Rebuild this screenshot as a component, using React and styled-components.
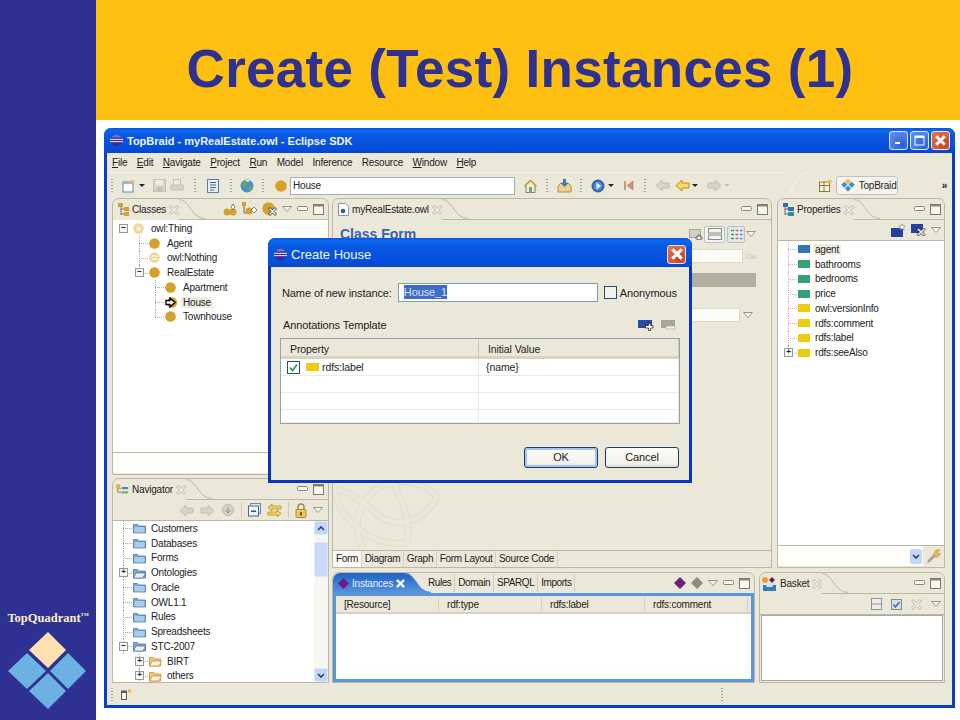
import React from 'react'
import styled, { createGlobalStyle } from 'styled-components'

const CHROME = '#ebe8d9'
const LINE = '#bcb8a5'
const NAVY = '#2e3192'

const Global = createGlobalStyle`
  html, body { margin: 0; padding: 0; background: #fff; }
  body { font-family: "Liberation Sans", Arial, sans-serif; font-size: 10px; letter-spacing: -0.2px; color: #222; }
  svg { display: block; flex: none; }
`

const Slide = styled.div`
  width: 960px;
  height: 720px;
  display: grid;
  grid-template-columns: 96px 1fr;
  overflow: hidden;
`
const Sidebar = styled.aside`
  background: ${NAVY};
  display: flex;
  flex-direction: column;
  justify-content: flex-end;
  align-items: center;
  padding-bottom: 10px;
`
const Brand = styled.div`
  font-family: "Liberation Serif", serif;
  font-weight: bold;
  font-size: 12.5px;
  letter-spacing: 0;
  color: #fbf0c8;
  white-space: nowrap;
  margin-bottom: 4px;
  sup { font-size: 5px; vertical-align: 6px; line-height: 0; }
`
const Main = styled.main`
  display: flex;
  flex-direction: column;
`
const Header = styled.header`
  height: 120px;
  box-sizing: border-box;
  padding: 16px 16px 0 0;
  background: #fdc010;
  display: flex;
  align-items: center;
  justify-content: center;
`
const Title = styled.h1`
  margin: 0;
  font-size: 53px;
  font-weight: bold;
  color: ${NAVY};
  letter-spacing: 0.3px;
`
const Stage = styled.div`
  flex: 1;
  padding: 8px 5px 12px 8px;
`

/* eclipse window */
const Win = styled.div`
  position: relative;
  height: 100%;
  box-sizing: border-box;
  display: flex;
  flex-direction: column;
  background: ${CHROME};
  border: solid #0a3ec8;
  border-width: 0 3px 3px 3px;
  border-radius: 7px 7px 0 0;
`
const TitleBar = styled.div`
  height: ${p => p.$h || 25}px;
  box-sizing: border-box;
  margin: 0 -3px;
  padding: ${p => p.$pt || 0}px ${p => p.$pr || 5}px 0 6px;
  flex: none;
  display: flex;
  align-items: center;
  gap: 2px;
  border-radius: 7px 7px 0 0;
  background: linear-gradient(#0a56dc 0, #0b68ee 10%, #0858e2 30%, #0550dc 75%, #0846cc 100%);
  color: #fff;
`
const WinTitle = styled.span`
  flex: 1;
  margin-left: 2px;
  font-size: ${p => p.$size || 11}px;
  font-weight: ${p => p.$weight || 'bold'};
  letter-spacing: 0;
  color: #f2f6ff;
  white-space: nowrap;
`
const CapsBtn = styled.span`
  width: 19px;
  height: 19px;
  box-sizing: border-box;
  border: 1px solid #dfe9fb;
  border-radius: 3px;
  display: flex;
  align-items: center;
  justify-content: center;
  background: ${p => p.$close
    ? 'radial-gradient(circle at 70% 75%, #c9401c, #e8724a 90%)'
    : 'radial-gradient(circle at 75% 80%, #2a5fd8, #5f8ef0 90%)'};
`
const MenuBar = styled.nav`
  height: 19px;
  flex: none;
  display: flex;
  align-items: center;
  gap: 9.5px;
  padding-left: 5px;
  u { text-decoration: underline; }
`
const ToolBar = styled.div`
  height: 26px;
  flex: none;
  display: flex;
  align-items: center;
  padding-left: 4px;
  border-top: 1px solid #f8f6ec;
  box-sizing: border-box;
`
const Grip = styled.span`
  width: 2px;
  height: 14px;
  margin: 0 ${p => p.$m ?? 8}px;
  background: repeating-linear-gradient(#a8a493 0 1px, transparent 1px 3px);
  flex: none;
`
const Tool = styled.span`
  width: ${p => p.$w || 18}px;
  flex: none;
  display: flex;
  justify-content: center;
  margin-left: ${p => p.$ml || 0}px;
`
const Caret = styled.span`
  width: 0;
  height: 0;
  margin: 0 5px 0 1px;
  border: solid transparent;
  border-width: 3px 3px 0;
  border-top-color: ${p => p.$off ? '#c5c2b4' : '#222'};
  flex: none;
`
const UrlInput = styled.div`
  width: 225px;
  height: 18px;
  box-sizing: border-box;
  flex: none;
  background: #fff;
  border: 1px solid #a3aebb;
  padding-left: 2px;
  line-height: 16px;
`
const PerspArea = styled.div`
  margin-left: auto;
  margin-top: -1px;
  height: 26px;
  display: flex;
  align-items: center;
  padding-right: 5px;
  background: ${CHROME};
`
const PerspBtn = styled.div`
  height: 19px;
  width: 62px;
  box-sizing: border-box;
  margin-left: 1px;
  margin-right: 44px;
  border: 1px solid #b9c3cf;
  border-radius: 3px;
  background: #f6f4ea;
  display: flex;
  align-items: center;
  gap: 3px;
  padding-left: 3px;
`
const More = styled.span`
  font-size: 10px;
  font-weight: bold;
`
const Workbench = styled.div`
  flex: 1;
  display: flex;
  gap: 3px;
  padding: 0 7px 0 5px;
  min-height: 0;
`
const Column = styled.div`
  display: flex;
  flex-direction: column;
  width: ${p => p.$w}px;
  gap: ${p => p.$gap}px;
`
const Row = styled.div`
  display: flex;
  height: ${p => p.$h}px;
  gap: ${p => p.$gap}px;
`
const StatusBar = styled.footer`
  height: 21px;
  flex: none;
  display: flex;
  align-items: center;
  padding-left: 4px;
`
const StatusIcon = styled.span`
  margin-left: 8px;
`
const StatusEnd = styled.span`
  display: flex;
  margin-left: 589px;
`

/* views */
const View = styled.section`
  width: ${p => p.$w}px;
  height: ${p => p.$h}px;
  box-sizing: border-box;
  display: flex;
  flex-direction: column;
  border: 1px solid ${LINE};
  border-radius: 7px 7px 0 0;
  background: ${CHROME};
  overflow: hidden;
`
const ViewHead = styled.div`
  height: 20px;
  flex: none;
  display: flex;
  align-items: stretch;
  border-bottom: 1px solid ${p => p.$active ? '#5b96d8' : LINE};
`
const Tab = styled.div`
  display: flex;
  align-items: center;
  gap: 3px;
  padding-left: ${p => p.$pl ?? 5}px;
  margin-bottom: -1px;
  color: ${p => p.$active ? '#e8f2ff' : '#222'};
  background: ${p => p.$active ? 'linear-gradient(#1f62c8, #5a96dc)' : CHROME};
  border-radius: 7px 0 0 0;
  white-space: nowrap;
`
const CurveWrap = styled.span`
  display: block;
  margin-bottom: -1px;
  flex: none;
`
const SideTabs = styled.div`
  display: flex;
  align-items: center;
  margin-left: -6px;
`
const SideTab = styled.span`
  padding: 0 3px;
  height: 18px;
  line-height: 18px;
  letter-spacing: -0.45px;
  border-right: 1px solid #cfcbb9;
`
const Actions = styled.div`
  margin-left: auto;
  display: flex;
  align-items: center;
  gap: ${p => p.$gap ?? 5}px;
  padding-right: ${p => p.$pr ?? 3}px;
`
const SubBar = styled.div`
  height: ${p => p.$h || 20}px;
  flex: none;
  display: flex;
  align-items: center;
  justify-content: flex-end;
  gap: ${p => p.$gap ?? 5}px;
  padding-right: ${p => p.$pr ?? 3}px;
  border-bottom: 1px solid ${LINE};
`
const Divider = styled.span`
  width: 1px;
  height: 16px;
  background: #cfcbb9;
`
const Split = styled.div`
  flex: 1;
  min-height: 0;
  display: flex;
`
const Tree = styled.div`
  flex: 1;
  min-height: 0;
  background: #fff;
  overflow: hidden;
  padding-top: ${p => p.$pt || 0}px;
`
const Node = styled.div`
  position: relative;
  height: 14.75px;
  display: flex;
  align-items: center;
  gap: 5px;
  padding-left: ${p => 6 + p.$level * 16}px;
  white-space: nowrap;
  &::before, &::after {
    content: ${p => p.$root ? 'none' : '""'};
    position: absolute;
    left: ${p => 10 + p.$level * 16}px;
  }
  &::before {
    top: 50%;
    width: 9px;
    border-top: 1px dotted ${p => p.$guide || '#aaa797'};
  }
  &::after {
    top: 0;
    height: ${p => p.$last ? '50%' : '100%'};
    border-left: 1px dotted ${p => p.$guide || '#aaa797'};
  }
`
const Expander = styled.span`
  position: relative;
  z-index: 1;
  width: 9px;
  height: 9px;
  box-sizing: border-box;
  flex: none;
  border: 1px solid ${p => p.$empty ? 'transparent' : '#8f9aa3'};
  background: ${p => p.$empty ? 'transparent' : '#f6f5ef'};
  font-size: 8px;
  line-height: 6px;
  text-align: center;
  color: #222;
  font-weight: bold;
`
const NodeIcon = styled.span`
  position: relative;
  z-index: 1;
  flex: none;
  background: #fff;
  padding-right: ${p => p.$pad || 0}px;
`
const Label = styled.span`
  padding: 0 2px;
  margin-left: -2px;
  background: ${p => p.$selected ? '#efece0' : 'transparent'};
`
const FilterRow = styled.div`
  height: ${p => p.$h || 20}px;
  flex: none;
  display: flex;
  align-items: center;
  gap: 3px;
  border-top: 1px solid ${LINE};
  padding-right: ${p => p.$pr || 0}px;
`
const FilterInput = styled.div`
  flex: 1;
  height: 100%;
  background: #fdfdfa;
  display: flex;
  justify-content: flex-end;
  align-items: center;
  padding-right: 1px;
`
const FilterBottom = styled.div`
  height: 1px;
  flex: none;
`
const ComboBtn = styled.span`
  width: 12px;
  height: 15px;
  border-radius: 2px;
  background: #c5d5f6;
  display: flex;
  align-items: center;
  justify-content: center;
`
const Scrollbar = styled.div`
  width: 14px;
  flex: none;
  background: #f7f7f2;
  display: flex;
  flex-direction: column;
`
const ScrollBtn = styled.span`
  height: 14px;
  flex: none;
  border-radius: 2px;
  background: #c5d5f6;
  border: 1px solid #dfe7fb;
  box-sizing: border-box;
  display: flex;
  align-items: center;
  justify-content: center;
`
const ScrollThumb = styled.span`
  height: 35px;
  margin-top: 7px;
  flex: none;
  border-radius: 2px;
  background: #c9d8f8;
  border: 1px solid #dfe7fb;
  box-sizing: border-box;
`
const ScrollFill = styled.span`
  flex: 1;
`

/* editor */
const FormPane = styled.div`
  position: relative;
  flex: 1;
  padding: 2px 15px 0 7px;
  overflow: hidden;
`
const FormHead = styled.div`
  height: 24px;
  display: flex;
  align-items: center;
`
const FormTitle = styled.div`
  flex: 1;
  font-size: 14px;
  font-weight: bold;
  letter-spacing: 0;
  color: #3a62ae;
`
const ViewToggle = styled.span`
  width: ${p => p.$w || 18}px;
  height: 17px;
  box-sizing: border-box;
  border: 1px solid #b7c0ca;
  border-radius: 2px;
  background: ${p => p.$on ? '#dfe3d8' : '#f6f4ea'};
  display: flex;
  align-items: center;
  justify-content: center;
  margin: 0 1px 0 1px;
`
const FormRow = styled.div`
  margin-top: ${p => p.$mt}px;
  height: 14px;
  display: flex;
  align-items: center;
  gap: 3px;
  padding-right: ${p => p.$pr || 0}px;
`
const FormField = styled.div`
  flex: 1;
  height: 100%;
  box-sizing: border-box;
  border: 1px solid #dcd9ca;
  background: #fdfdf8;
`
const OkText = styled.span`
  color: #c4c1b2;
  font-size: 8px;
  width: 10px;
`
const SectionBar = styled.div`
  margin-top: 10px;
  height: 14px;
  background: #b4b0a1;
`
const Knot = styled.div`
  position: absolute;
  left: 0;
  bottom: 1px;
`
const PageTabs = styled.div`
  height: 16px;
  flex: none;
  display: flex;
  border-top: 1px solid ${LINE};
`
const PageTab = styled.span`
  padding: 0 2.5px 0 3px;
  line-height: 16px;
  letter-spacing: -0.3px;
  border-right: 1px solid #d5d1bf;
  background: ${p => p.$on ? '#fbfaf5' : 'transparent'};
`

/* instances */
const Framed = styled.div`
  flex: 1;
  min-height: 0;
  border: 3px solid #5b96d8;
  border-top-width: 2px;
  background: #fff;
`
const ColumnHeads = styled.div`
  display: grid;
  grid-template-columns: repeat(4, 103px) 1fr;
  height: 18px;
  background: ${CHROME};
  border-bottom: 2px solid #d6d2c1;
  box-sizing: border-box;
`
const ColumnHead = styled.span`
  padding-left: 8px;
  line-height: 17px;
  border-right: 1px solid #d6d2c1;
`
const BasketList = styled.div`
  flex: 1;
  margin: 0 1px 1px;
  border: 1px solid #a7a99e;
  background: #fff;
`

/* dialog */
const Dialog = styled.div`
  position: absolute;
  left: 161px;
  top: 110px;
  width: 424px;
  height: 245px;
  box-sizing: border-box;
  background: #ebe8da;
  border: solid #0a35c0;
  border-width: 0 3px 3px;
  border-radius: 7px 7px 0 0;
  font-size: 11px;
  letter-spacing: -0.1px;
  display: flex;
  flex-direction: column;
`
const DialogBody = styled.div`
  flex: 1;
  padding: 16px 9px 0 9px;
  display: flex;
  flex-direction: column;
`
const NameRow = styled.div`
  display: flex;
  align-items: center;
  height: 19px;
  padding-left: 2px;
`
const NameInput = styled.div`
  width: 200px;
  height: 19px;
  box-sizing: border-box;
  margin: 0 6px 0 6px;
  background: #fff;
  border: 1px solid #7f9db9;
  padding: 1px 0 0 5px;
`
const Selected = styled.span`
  background: #3f6cc4;
  color: #d9e4fb;
  line-height: 14px;
  display: inline-block;
`
const CheckBox = styled.span`
  width: 13px;
  height: 13px;
  box-sizing: border-box;
  flex: none;
  border: 1px solid #1d5180;
  background: ${p => p.$plain ? '#f3f1e6' : '#fff'};
  display: flex;
  align-items: center;
  justify-content: center;
  margin-right: ${p => p.$plain ? 3 : 6}px;
`
const TemplateRow = styled.div`
  margin-top: 15px;
  height: 16px;
  padding-left: 3px;
  display: flex;
  align-items: center;
  justify-content: space-between;
  padding-right: 4px;
`
const TemplateTools = styled.div`
  display: flex;
  gap: 7px;
`
const Table = styled.div`
  margin-top: 5px;
  height: 86px;
  box-sizing: border-box;
  background: #fff;
  border: 1px solid #93a3b3;
  display: grid;
  grid-template-columns: 198px 1fr;
  grid-template-rows: 20px 17px 17px 17px 1fr;
`
const Th = styled.div`
  background: ${CHROME};
  border-bottom: 3px solid #d8d4c3;
  border-right: 1px solid #cbc7b5;
  padding-left: 9px;
  line-height: 20px;
  font-size: 10.5px;
`
const Td = styled.div`
  display: flex;
  align-items: center;
  padding-left: ${p => p.$pl || 6}px;
  border-bottom: 1px solid #eeecdf;
  border-right: 1px solid #eeecdf;
  font-size: 10.5px;
`
const Swatch = styled.span`
  width: 13px;
  height: 8px;
  flex: none;
  background: #e9cd0e;
  margin-right: 3px;
`
const DialogButtons = styled.div`
  margin-top: 23px;
  padding-right: 1px;
  display: flex;
  justify-content: flex-end;
  gap: 7px;
`
const Button = styled.span`
  width: 74px;
  height: 21px;
  box-sizing: border-box;
  border: 1px solid #1a3c6e;
  border-radius: 3px;
  background: linear-gradient(#fefefb, #f2f0e6 85%, #ddd9c8);
  text-align: center;
  line-height: 19px;
  box-shadow: ${p => p.$default ? 'inset 0 0 0 2px #a9c4ec' : 'none'};
`

/* --- small drawings --- */
const Svg = ({ w = 16, h = 16, children }) => (
  <svg width={w} height={h} viewBox={`0 0 ${w} ${h}`}>{children}</svg>
)
const ClassDot = ({ size = 11 }) => (
  <svg width={size} height={size} viewBox="0 0 11 11"><circle cx="5.5" cy="5.5" r="5.3" fill="#d6a02c" /></svg>
)
const PaleDot = () => (
  <svg width="11" height="11" viewBox="0 0 11 11">
    <circle cx="5.5" cy="5.5" r="5.2" fill="#ecd69a" /><circle cx="5.5" cy="5.5" r="2.6" fill="#f6ecce" />
  </svg>
)
const NothingDot = () => (
  <svg width="11" height="11" viewBox="0 0 11 11">
    <circle cx="5.5" cy="5.5" r="5.2" fill="#ecd69a" /><rect x="2.5" y="3.5" width="6" height="1.2" fill="#fff" /><rect x="2.5" y="6.3" width="6" height="1.2" fill="#fff" />
  </svg>
)
const MarkedDot = () => (
  <svg width="13" height="11" viewBox="0 0 13 11">
    <circle cx="7" cy="5.5" r="5.2" fill="#d6a02c" />
    <path d="M1 3.5h4V1l5 4.5L5 10V7.5H1z" fill="#fff" stroke="#000" strokeWidth="1.4" />
  </svg>
)
const Folder = ({ open, color = '#7aa8d8' }) => (
  <svg width="13" height="12" viewBox="0 0 13 12">
    <path d="M.5 2.5h4l1 1.5h7v7H.5z" fill={color} stroke="#3f6b96" strokeWidth=".7" />
    {open
      ? <path d="M.5 11l2.5-5h9.5l-2.5 5z" fill="#e9f2fb" stroke="#3f6b96" strokeWidth=".7" />
      : <rect x="1.5" y="5" width="10" height="5.5" fill="#a9cbec" />}
  </svg>
)
const OpenFolderGold = () => (
  <svg width="13" height="12" viewBox="0 0 13 12">
    <path d="M.5 2.5h4l1 1.5h6v7H.5z" fill="#f2c78a" stroke="#c98a2d" strokeWidth=".8" />
    <path d="M.5 11l2.5-5h9.5l-2.5 5z" fill="#fff3dc" stroke="#c98a2d" strokeWidth=".8" />
  </svg>
)
const PropSwatch = ({ color }) => (
  <svg width="12" height="8" viewBox="0 0 12 8"><rect width="12" height="8" fill={color} /></svg>
)
const ViewMenu = () => (
  <Svg w={10} h={6}><path d="M.5.5h9L5 5.5z" fill="#f8f6ee" stroke="#8f8c7c" strokeWidth=".9" /></Svg>
)
const MinBtn = () => (
  <Svg w={11} h={6}><rect x=".5" y=".5" width="10" height="4" rx="1" fill="#f8f6ee" stroke="#8a8778" /></Svg>
)
const MaxBtn = () => (
  <Svg w={11} h={11}><rect x=".5" y=".5" width="10" height="10" fill="#f8f6ee" stroke="#7d7a6c" /><rect x="1" y="1" width="9" height="1.5" fill="#8a8778" /></Svg>
)
const CloseX = ({ color = '#a3a091', fill = '#f4f2e8', size = 10 }) => (
  <svg width={size} height={size} viewBox="0 0 10 10">
    <path d="M.5 2L2 .5 5 3.5 8 .5 9.5 2 6.5 5 9.5 8 8 9.5 5 6.5 2 9.5.5 8 3.5 5z" fill={fill} stroke={color} strokeWidth=".7" />
  </svg>
)
const Curve = ({ active, w = 26 }) => (
  <CurveWrap>
    <svg width={w} height="20" viewBox="0 0 26 20" preserveAspectRatio="none">
      <path d="M0 0C11 0 12 19 26 19V20H0z" fill={active ? 'url(#tabblue)' : CHROME} />
      <defs><linearGradient id="tabblue" x1="0" y1="0" x2="0" y2="1"><stop offset="0" stopColor="#1f62c8" /><stop offset="1" stopColor="#5a96dc" /></linearGradient></defs>
      <path d="M0 .5C11 .5 12 19.5 26 19.5" fill="none" stroke={active ? '#5b96d8' : LINE} />
    </svg>
  </CurveWrap>
)
const Diamond = ({ color = '#6a1f7a', size = 11 }) => (
  <svg width={size} height={size} viewBox="0 0 11 11"><path d="M5.5 0L11 5.5 5.5 11 0 5.5z" fill={color} /></svg>
)
const EclipseBall = () => (
  <svg width="13" height="13" viewBox="0 0 15 15">
    <circle cx="7.5" cy="7.5" r="6.5" fill="#3b2a8c" />
    <rect x="0" y="5.6" width="15" height="1.2" fill="#e8e4f8" />
    <rect x="0" y="8.2" width="15" height="1.2" fill="#e8e4f8" />
    <path d="M2 4a6.5 6.5 0 0 1 11 0z" fill="#7d6ed0" />
  </svg>
)
const GridArrow = ({ dir }) => (
  <Svg w={8} h={5}><path d={dir === 'up' ? 'M1 4l3-3 3 3' : 'M1 1l3 3 3-3'} fill="none" stroke="#23407c" strokeWidth="1.6" /></Svg>
)
const ArrowTool = ({ left, color = '#d8d5c6', edge = '#c0bdae' }) => (
  <Svg w={15} h={13}>
    <path d={left ? 'M1 6.5L7 1v3h7v5H7v3z' : 'M14 6.5L8 1v3H1v5h7v3z'} fill={color} stroke={edge} />
  </Svg>
)
const NewIcon = () => (
  <Svg w={14} h={14}><rect x="1" y="3" width="10" height="10" fill="#fff" stroke="#5f7fa5" /><path d="M1 3h10v2H1z" fill="#9cb7d8" /><path d="M10.5 0l1 1.6 1.8.2-1.3 1.2.4 1.8-1.9-1-1.8 1 .4-1.8L8.300 1.800l1.800-.2z" fill="#efc13a" /></Svg>
)
const SaveOff = () => (
  <Svg w={13} h={13}><rect x=".5" y=".5" width="12" height="12" fill="#d9d6c8" stroke="#c4c1b2" /><rect x="3" y="1" width="7" height="5" fill="#efede2" /><rect x="3.500" y="8" width="6" height="4" fill="#c4c1b2" /></Svg>
)
const PrintOff = () => (
  <Svg w={14} h={13}><rect x="3.500" y=".5" width="7" height="6" fill="#efede2" stroke="#c4c1b2" /><rect x=".5" y="6" width="13" height="5" rx="1" fill="#d5d2c4" stroke="#c4c1b2" /></Svg>
)
const DocTool = () => (
  <Svg w={12} h={14}><rect x=".5" y=".5" width="11" height="13" fill="#e6edf6" stroke="#5f7f9f" /><path d="M3 3.500h6M3 6h6M3 8.500h6M3 11h4" stroke="#456a92" /></Svg>
)
const Globe = () => (
  <Svg w={14} h={14}>
    <circle cx="7" cy="7" r="6.500" fill="#4a8fd0" />
    <path d="M3 3c2-1 3 0 4 1s0 3-1 3-1 2-2 2-2-3-1-6zM9 8c1-1 3-1 4 0-1 3-3 4-4 4s-1-3 0-4z" fill="#6aa84a" />
    <path d="M5 1.500c2-1 4-.5 5 .5-1 1-3 1-5-.5z" fill="#f0f4e0" />
  </Svg>
)
const Home = () => (
  <Svg w={13} h={14}><path d="M6.500 1L12.500 7H11v6.500H2V7H.5z" fill="#f3ead0" stroke="#6b8a6a" /><rect x="5" y="8" width="3" height="5.500" fill="#7fa27a" /><path d="M1 7l5.500-5.500L12 7" fill="none" stroke="#c9952e" strokeWidth="1.200" /></Svg>
)
const Install = () => (
  <Svg w={15} h={14}><path d="M1 7l3-3h7l3 3v6H1z" fill="#f0d08e" stroke="#b98a35" /><path d="M6 0h3v4h2.500L7.500 8 3.500 4H6z" fill="#3a78c0" /></Svg>
)
const RunIcon = () => (
  <Svg w={14} h={14}><circle cx="7" cy="7" r="6.500" fill="#2f66b0" /><circle cx="7" cy="7" r="4.500" fill="#4f8ad0" /><path d="M5.500 3.500L10 7l-4.500 3.500z" fill="#fff" /></Svg>
)
const PrevRed = () => (
  <Svg w={11} h={11}><rect x="1" y="1" width="2" height="9" fill="#b9a46a" /><path d="M10 1v9L4 5.500z" fill="#d98c80" stroke="#b66" strokeWidth=".5" /></Svg>
)
const PerspNew = () => (
  <Svg w={14} h={13}><rect x=".5" y="3" width="10" height="9.500" fill="#faf4dc" stroke="#8a7a40" /><path d="M.5 6.500h10M5 3v9.500" stroke="#8a7a40" /><path d="M11 0l.8 1.500 1.700.2-1.200 1.100.3 1.700-1.600-.8-1.600.8.300-1.700-1.200-1.100 1.700-.2z" fill="#efc13a" /></Svg>
)
const QuadMini = () => (
  <Svg w={16} h={14}>
    <path d="M8 .5l3 3-3 3-3-3z" fill="#f0b53a" />
    <path d="M4.300 3.800l3 3-3 3-3-3zM11.700 3.800l3 3-3 3-3-3zM8 7.500l3 3-3 3-3-3z" fill="#3a8ed8" />
  </Svg>
)
const HierarchyIcon = ({ color = '#d6a02c', node = '#c8a23a' }) => (
  <Svg w={11} h={14}><path d="M3 2v10M3 6h5M3 11h5" stroke="#6a7a6a" fill="none" /><rect x="0" y="0" width="5" height="4" fill={node} /><rect x="6" y="4" width="5" height="4" fill={color} /><rect x="6" y="9" width="5" height="4" fill={color} /></Svg>
)
const ClassTool = ({ kind }) => {
  if (kind === 'star') return (
    <Svg w={14} h={13}><circle cx="4" cy="9" r="3.500" fill="#d6a02c" /><circle cx="10" cy="9" r="3.500" fill="#d6a02c" /><path d="M8 4l2-3 2 3-2 3z" fill="#fff" stroke="#333" strokeWidth=".6" /></Svg>
  )
  if (kind === 'add') return (
    <Svg w={15} h={14}><path d="M2 1v10h4" stroke="#666" fill="none" /><rect x="0" y="0" width="4" height="4" fill="#d6a02c" /><circle cx="7" cy="9" r="3.500" fill="#d6a02c" /><path d="M12 5l3 3-3 3-3-3z" fill="#fff" stroke="#333" strokeWidth=".6" /></Svg>
  )
  return (
    <Svg w={15} h={14}><circle cx="6.500" cy="6.500" r="6.300" fill="#d6a02c" /><g transform="translate(6 5)"><path d="M.5 2L2 .5 4.500 3 7 .5 8.500 2 6 4.500 8.500 7 7 8.500 4.500 6 2 8.500.5 7 3 4.500z" fill="#fff" stroke="#111" strokeWidth=".8" /></g></Svg>
  )
}
const DocTab = () => (
  <Svg w={11} h={13}><path d="M.5.5h7l3 3v9H.5z" fill="#fdfdfb" stroke="#8a94a0" /><circle cx="5" cy="8" r="2.300" fill="#2f5aa8" /></Svg>
)
const NavIcon = () => (
  <svg width="13" height="12" viewBox="0 0 15 13"><path d="M2 3v6M2 9h6M2 5h4" stroke="#777" fill="none" /><rect x="0" y="0" width="5" height="5" rx="1" fill="#e2b24a" /><rect x="7" y="3" width="7" height="2.500" fill="#4d82c2" /><rect x="7" y="8" width="7" height="2.500" fill="#7fa96a" /></svg>
)
const CollapseAll = () => (
  <Svg w={13} h={14}><rect x="2.500" y=".5" width="10" height="10" fill="#dbe7f5" stroke="#6f8cab" /><rect x=".5" y="3" width="10" height="10" fill="#eef4fb" stroke="#46688c" /><rect x="3" y="7.500" width="5" height="1.400" fill="#22456e" /></Svg>
)
const LinkArrows = () => (
  <Svg w={15} h={15}><path d="M1 4.500L5 1v2h9v3H5v2z" fill="#f1d060" stroke="#b98f20" strokeWidth=".8" /><path d="M14 10.500L10 7v2H1v3h9v2z" fill="#f1d060" stroke="#b98f20" strokeWidth=".8" /></Svg>
)
const Lock = () => (
  <Svg w={12} h={15}><path d="M3 7V4a3 3 0 0 1 6 0v3" fill="none" stroke="#9a8a50" strokeWidth="1.500" /><rect x="1" y="6.500" width="10" height="8" rx="1" fill="#edc660" stroke="#b08a2a" /><rect x="5" y="9" width="2" height="3.500" fill="#7a5a1a" /></Svg>
)
const SyncOff = () => (
  <Svg w={14} h={14}><circle cx="7" cy="7" r="5.500" fill="#d6d4c8" stroke="#b8b6a8" /><path d="M7 4v6M4.500 7.500L7 10l2.500-2.500" fill="none" stroke="#8f8d80" /></Svg>
)
const BoxStar = () => (
  <Svg w={15} h={13}><rect x="0" y="4" width="12" height="9" fill="#25419c" /><path d="M11 0l1 2 2.200.2-1.600 1.500.5 2.200-2.100-1.100-2 1.100.4-2.200L7.800 2.200 10 2z" fill="#fff" stroke="#333" strokeWidth=".4" /></Svg>
)
const BoxX = () => (
  <Svg w={15} h={14}><rect x="0" y="1" width="12" height="9" fill="#25419c" /><g transform="translate(5.500 4.500)"><path d="M.5 2L2 .5 4.500 3 7 .5 8.500 2 6 4.500 8.500 7 7 8.500 4.500 6 2 8.500.5 7 3 4.500z" fill="#fff" stroke="#111" strokeWidth=".8" /></g></Svg>
)
const BoxPlus = () => (
  <Svg w={16} h={13}><rect x="0" y="1" width="14" height="8" fill="#2a4aa6" /><path d="M8.500 5h3V2.800h2.200V5H16v2.500h-2.300V10h-2.200V7.500h-3z" fill="#fff" stroke="#111" strokeWidth=".7" transform="translate(-1 1.500)" /></Svg>
)
const BoxMinusOff = () => (
  <Svg w={15} h={11}><rect x="0" y="1" width="14" height="8" fill="#a9a695" /><rect x="5" y="7" width="9" height="3" fill="#f1efe4" stroke="#a9a695" strokeWidth=".6" /></Svg>
)
const FormIcon = () => (
  <Svg w={14} h={11}><rect x=".5" y=".5" width="11" height="8" fill="#d3d0c1" stroke="#aaa797" /><path d="M7 8h2V6h2v2h2v2h-2v1H9v-1H7z" fill="#fff" stroke="#222" strokeWidth=".6" /></Svg>
)
const SplitView = () => (
  <Svg w={14} h={12}><rect x=".5" y=".5" width="13" height="4.500" fill="#f6f4ea" stroke="#7f8b98" /><rect x=".5" y="7" width="13" height="4.500" fill="#f6f4ea" stroke="#7f8b98" /></Svg>
)
const TableView = () => (
  <Svg w={13} h={13}><rect width="13" height="13" fill="#e7eef0" /><path d="M1 2.500h3M1 6.500h3M1 10.500h3" stroke="#2f9a6a" strokeWidth="1.500" /><path d="M5.500 2.500h3M5.500 6.500h3M5.500 10.500h3" stroke="#c55a6a" strokeWidth="1.500" /><path d="M10 2.500h2.500M10 6.500h2.500M10 10.500h2.500" stroke="#4a7ac0" strokeWidth="1.500" /></Svg>
)
const PropTabIcon = () => (
  <Svg w={11} h={14}><path d="M2 3v9M2 6h4M2 11h4" stroke="#667" fill="none" /><rect x="0" y="0" width="5" height="4" fill="#2f6fb0" /><rect x="5" y="4" width="6" height="4" fill="#2f6fb0" /><rect x="5" y="9" width="6" height="4" fill="#2f8fa0" /></Svg>
)
const Wrench = () => (
  <Svg w={15} h={15}><path d="M1 14l1-3 6-6 2 2-6 6z" fill="#a7a495" /><path d="M8 5c0-3 3-5 6-4l-3 2 1 2 2-1c0 3-3 5-5 4z" fill="#ecb95a" stroke="#b98a35" strokeWidth=".6" /></Svg>
)
const BasketIcon = () => (
  <Svg w={15} h={14}><circle cx="3" cy="3" r="3" fill="#e2a52a" /><path d="M10 0l3 3-3 3-3-3z" fill="#6a1f5a" /><path d="M1 8h3l1 2h5l1-2h3v6H1z" fill="#3a78c0" /><rect x="4" y="6" width="7" height="3" fill="#cfe0f2" /></Svg>
)
const SplitOff = () => (
  <Svg w={11} h={12}><rect x=".5" y=".5" width="10" height="11" fill="#f0eee4" stroke="#8a94a0" /><path d="M.5 6h10" stroke="#8a94a0" /></Svg>
)
const CheckOn = () => (
  <Svg w={11} h={11}><rect x=".5" y=".5" width="10" height="10" fill="#d8dde6" stroke="#7f8b98" /><path d="M2.500 5.500l2 2.500 4-5" fill="none" stroke="#3a6ca8" strokeWidth="1.500" /></Svg>
)
const GreenCheck = () => (
  <Svg w={9} h={9}><path d="M1 4.500l2.500 3 4.500-6" fill="none" stroke="#3d9a3a" strokeWidth="1.800" /></Svg>
)
const Mosaic = () => (
  <svg width="80" height="80" viewBox="0 0 80 80">
    <path d="M40 2l18 18-18 18-19-18z" fill="#fce0b0" />
    <path d="M19 23l19 18-19 18L0 41zM60 23l18 18-18 18-18-18zM40 43l18 18-18 18-19-18z" fill="#6bb2e2" />
  </svg>
)
const knotPaths = [
  'M2 8C6 38 36 66 74 62',
  'M30 67C16 42 28 10 60 1',
  'M104 16C90 42 60 50 40 30 30 20 14 10 2 8',
  'M104 16C94 4 72 -2 60 1',
  'M74 62C78 44 72 24 60 1',
]
const KnotArt = () => (
  <svg width="108" height="68" viewBox="0 0 108 68">
    <g fill="none" stroke="#e2decb" strokeWidth="7">
      {knotPaths.map(d => <path key={d} d={d} />)}
    </g>
    <g fill="none" stroke={CHROME} strokeWidth="4.500">
      {knotPaths.map(d => <path key={d} d={d} />)}
    </g>
  </svg>
)

const Item = ({ level = 0, expand, icon, text, selected, root, last, guide, pad }) => (
  <Node $level={level} $root={root} $last={last} $guide={guide}>
    {expand ? <Expander>{expand}</Expander> : <Expander $empty />}
    <NodeIcon $pad={pad}>{icon}</NodeIcon>
    <Label $selected={selected}>{text}</Label>
  </Node>
)

const ViewTab = ({ icon, text, active, pl }) => (
  <>
    <Tab $active={active} $pl={pl}>
      {icon}
      <span>{text}</span>
      {active ? <CloseX color="#fff" fill="#fff" size={9} /> : <CloseX />}
    </Tab>
    <Curve active={active} />
  </>
)
const WinControls = () => (
  <>
    <MinBtn />
    <MaxBtn />
  </>
)

const classItems = [
  { text: 'owl:Thing', icon: <PaleDot />, expand: '−', root: true, pad: 2 },
  { text: 'Agent', icon: <ClassDot />, level: 1, pad: 2 },
  { text: 'owl:Nothing', icon: <NothingDot />, level: 1, pad: 2 },
  { text: 'RealEstate', icon: <ClassDot />, expand: '−', level: 1, last: true, pad: 2 },
  { text: 'Apartment', icon: <ClassDot />, level: 2, pad: 2 },
  { text: 'House', icon: <MarkedDot />, level: 2, selected: true },
  { text: 'Townhouse', icon: <ClassDot />, level: 2, last: true, pad: 2 },
]
const navItems = [
  { text: 'Customers' }, { text: 'Databases' }, { text: 'Forms' },
  { text: 'Ontologies', open: true, expand: '+' },
  { text: 'Oracle' }, { text: 'OWL1.1' }, { text: 'Rules' }, { text: 'Spreadsheets' },
  { text: 'STC-2007', open: true, expand: '−' },
]
const propItems = [
  { text: 'agent', color: '#2f78b8', selected: true },
  { text: 'bathrooms', color: '#2fa27a' },
  { text: 'bedrooms', color: '#2fa27a' },
  { text: 'price', color: '#2fa27a' },
  { text: 'owl:versionInfo', color: '#e9cd0e' },
  { text: 'rdfs:comment', color: '#e9cd0e' },
  { text: 'rdfs:label', color: '#e9cd0e' },
  { text: 'rdfs:seeAlso', color: '#e9cd0e', expand: '+', last: true },
]

export default function App() {
  return (
    <Slide>
      <Global />
      <Sidebar>
        <Brand>TopQuadrant<sup>TM</sup></Brand>
        <Mosaic />
      </Sidebar>
      <Main>
        <Header>
          <Title>Create (Test) Instances (1)</Title>
        </Header>
        <Stage>
          <Win>
            <TitleBar>
              <EclipseBall />
              <WinTitle>TopBraid - myRealEstate.owl - Eclipse SDK</WinTitle>
              <CapsBtn><Svg w={9} h={9}><rect x="1" y="6" width="5" height="2" fill="#fff" /></Svg></CapsBtn>
              <CapsBtn><Svg w={11} h={11}><rect x="1" y="1" width="9" height="9" fill="none" stroke="#fff" /><rect x="1" y="1" width="9" height="2" fill="#fff" /></Svg></CapsBtn>
              <CapsBtn $close><CloseX color="#fff" fill="#fff" size={11} /></CapsBtn>
            </TitleBar>
            <MenuBar>
              <span><u>F</u>ile</span>
              <span><u>E</u>dit</span>
              <span><u>N</u>avigate</span>
              <span><u>P</u>roject</span>
              <span><u>R</u>un</span>
              <span>Model</span>
              <span>Inference</span>
              <span>Resource</span>
              <span><u>W</u>indow</span>
              <span><u>H</u>elp</span>
            </MenuBar>
            <ToolBar>
              <Grip $m={0} />
              <Tool $ml={7}><NewIcon /></Tool><Caret />
              <Tool><SaveOff /></Tool>
              <Tool><PrintOff /></Tool>
              <Grip />
              <Tool><DocTool /></Tool>
              <Grip />
              <Tool $w={14}><Globe /></Tool>
              <Grip />
              <Tool><ClassDot size={12} /></Tool>
              <UrlInput>House</UrlInput>
              <Tool $ml={6}><Home /></Tool>
              <Grip $m={7} />
              <Tool><Install /></Tool>
              <Grip $m={7} />
              <Tool><RunIcon /></Tool><Caret />
              <Tool><PrevRed /></Tool>
              <Grip $m={7} />
              <Tool><ArrowTool left /></Tool>
              <Tool $ml={2}><ArrowTool left color="#f5d860" edge="#b98f20" /></Tool><Caret />
              <Tool $ml={2}><ArrowTool /></Tool><Caret $off />
              <PerspArea>
                <svg width="24" height="26" viewBox="0 0 24 26">
                  <path d="M0 26C10 24 12 0 24 .5" fill="none" stroke="#f8f6ec" />
                </svg>
                <Tool $ml={10}><PerspNew /></Tool>
                <PerspBtn><QuadMini />TopBraid</PerspBtn>
                <More>»</More>
              </PerspArea>
            </ToolBar>
            <Workbench>
              <Column $w={217} $gap={3}>
                <View $h={277}>
                  <ViewHead>
                    <ViewTab icon={<HierarchyIcon />} text="Classes" />
                    <Actions $pr={4}>
                      <ClassTool kind="star" /><ClassTool kind="add" /><ClassTool kind="del" />
                      <ViewMenu /><WinControls />
                    </Actions>
                  </ViewHead>
                  <Tree $pt={1}>
                    {classItems.map(it => <Item key={it.text} {...it} />)}
                  </Tree>
                  <FilterRow><FilterInput /></FilterRow>
                  <FilterBottom />
                </View>
                <View $h={205}>
                  <ViewHead>
                    <ViewTab pl={3} icon={<NavIcon />} text="Navigator" />
                    <Actions $pr={4}><WinControls /></Actions>
                  </ViewHead>
                  <SubBar $gap={6} $pr={5}>
                    <ArrowTool left />
                    <ArrowTool />
                    <SyncOff />
                    <Divider />
                    <CollapseAll />
                    <LinkArrows />
                    <Divider />
                    <Lock />
                    <ViewMenu />
                  </SubBar>
                  <Split>
                    <Tree>
                      {navItems.map(it => (
                        <Item key={it.text} text={it.text} expand={it.expand} icon={<Folder open={it.open} />} />
                      ))}
                      <Item level={1} expand="+" text="BIRT" icon={<OpenFolderGold />} />
                      <Item level={1} expand="+" text="others" icon={<OpenFolderGold />} />
                    </Tree>
                    <Scrollbar>
                      <ScrollBtn><GridArrow dir="up" /></ScrollBtn>
                      <ScrollThumb />
                      <ScrollFill />
                      <ScrollBtn><GridArrow /></ScrollBtn>
                    </Scrollbar>
                  </Split>
                </View>
              </Column>
              <Column $w={613} $gap={4}>
                <Row $h={370} $gap={5}>
                  <View $w={440}>
                    <ViewHead>
                      <ViewTab icon={<DocTab />} text="myRealEstate.owl" />
                      <Actions $pr={3}><WinControls /></Actions>
                    </ViewHead>
                    <FormPane>
                      <FormHead>
                        <FormTitle>Class Form</FormTitle>
                        <FormIcon />
                        <ViewToggle $w={21}><SplitView /></ViewToggle>
                        <ViewToggle $on><TableView /></ViewToggle>
                        <ViewMenu />
                      </FormHead>
                      <FormRow $mt={3}><FormField /><OkText>Ok</OkText></FormRow>
                      <SectionBar />
                      <FormRow $mt={21} $pr={3}><FormField /><ViewMenu /></FormRow>
                      <Knot><KnotArt /></Knot>
                    </FormPane>
                    <PageTabs>
                      <PageTab $on>Form</PageTab>
                      <PageTab>Diagram</PageTab>
                      <PageTab>Graph</PageTab>
                      <PageTab>Form Layout</PageTab>
                      <PageTab>Source Code</PageTab>
                    </PageTabs>
                  </View>
                  <View $w={168}>
                    <ViewHead>
                      <ViewTab icon={<PropTabIcon />} text="Properties" />
                      <Actions $pr={3}><WinControls /></Actions>
                    </ViewHead>
                    <SubBar $gap={5}><BoxStar /><BoxX /><ViewMenu /></SubBar>
                    <Tree $pt={1}>
                      {propItems.map(it => (
                        <Item key={it.text} text={it.text} expand={it.expand} last={it.last} selected={it.selected}
                          guide="#d9a9b0" icon={<PropSwatch color={it.color} />} />
                      ))}
                    </Tree>
                    <FilterRow $pr={3}>
                      <FilterInput><ComboBtn><GridArrow /></ComboBtn></FilterInput>
                      <Wrench />
                    </FilterRow>
                    <FilterBottom />
                  </View>
                </Row>
                <Row $h={111} $gap={4}>
                  <View $w={423}>
                    <ViewHead $active>
                      <ViewTab active icon={<Diamond />} text="Instances" />
                      <SideTabs>
                        <SideTab>Rules</SideTab>
                        <SideTab>Domain</SideTab>
                        <SideTab>SPARQL</SideTab>
                        <SideTab>Imports</SideTab>
                      </SideTabs>
                      <Actions $pr={4}>
                        <Diamond size={12} />
                        <Diamond color="#8f8c80" size={12} />
                        <ViewMenu />
                        <WinControls />
                      </Actions>
                    </ViewHead>
                    <Framed>
                      <ColumnHeads>
                        <ColumnHead>[Resource]</ColumnHead>
                        <ColumnHead>rdf:type</ColumnHead>
                        <ColumnHead>rdfs:label</ColumnHead>
                        <ColumnHead>rdfs:comment</ColumnHead>
                        <span />
                      </ColumnHeads>
                    </Framed>
                  </View>
                  <View $w={186}>
                    <ViewHead>
                      <ViewTab pl={2} icon={<BasketIcon />} text="Basket" />
                      <Actions $pr={3}><WinControls /></Actions>
                    </ViewHead>
                    <SubBar $gap={9}>
                      <SplitOff /><CheckOn /><CloseX size={11} /><ViewMenu />
                    </SubBar>
                    <BasketList />
                  </View>
                </Row>
              </Column>
            </Workbench>
            <StatusBar>
              <Grip $m={0} />
              <StatusIcon>
                <Svg w={11} h={11}><rect x=".5" y="2" width="5" height="8.500" fill="#f6f4ea" stroke="#55606a" /><rect x=".5" y="2" width="5" height="2" fill="#55606a" /><path d="M8.500 0l2 2-2 2-2-2z" fill="#e2b24a" /></Svg>
              </StatusIcon>
              <StatusEnd><Grip $m={0} /></StatusEnd>
            </StatusBar>

            <Dialog>
              <TitleBar $h={29} $pt={3} $pr={6}>
                <EclipseBall />
                <WinTitle $size={13} $weight="normal">Create House</WinTitle>
                <CapsBtn $close><CloseX color="#fff" fill="#fff" size={12} /></CapsBtn>
              </TitleBar>
              <DialogBody>
                <NameRow>
                  Name of new instance:
                  <NameInput><Selected>House_1</Selected></NameInput>
                  <CheckBox $plain />
                  Anonymous
                </NameRow>
                <TemplateRow>
                  Annotations Template
                  <TemplateTools><BoxPlus /><BoxMinusOff /></TemplateTools>
                </TemplateRow>
                <Table>
                  <Th>Property</Th>
                  <Th>Initial Value</Th>
                  <Td><CheckBox><GreenCheck /></CheckBox><Swatch />rdfs:label</Td>
                  <Td $pl={7}>{'{name}'}</Td>
                  <Td /><Td />
                  <Td /><Td />
                  <Td /><Td />
                </Table>
                <DialogButtons>
                  <Button $default>OK</Button>
                  <Button>Cancel</Button>
                </DialogButtons>
              </DialogBody>
            </Dialog>
          </Win>
        </Stage>
      </Main>
    </Slide>
  )
}
